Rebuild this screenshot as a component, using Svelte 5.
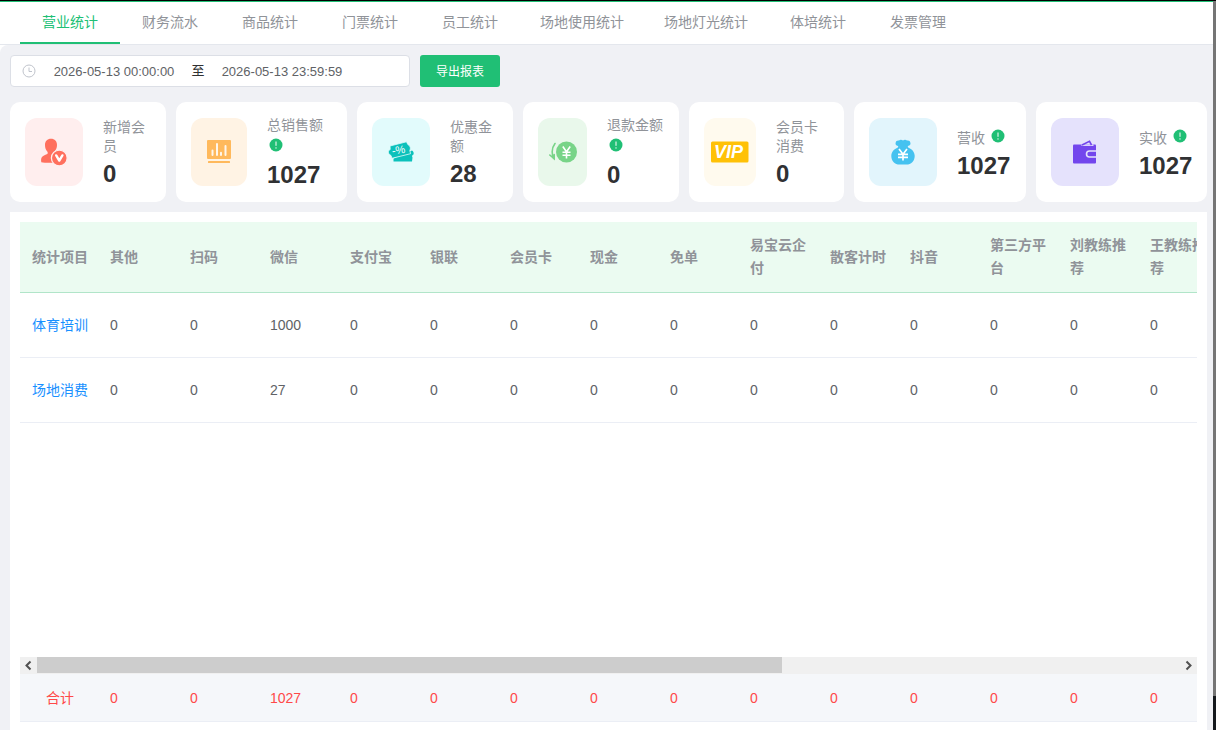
<script>
	const tabs = [
		'营业统计',
		'财务流水',
		'商品统计',
		'门票统计',
		'员工统计',
		'场地使用统计',
		'场地灯光统计',
		'体培统计',
		'发票管理'
	];
	let activeTab = '营业统计';

	let startTime = '2026-05-13 00:00:00';
	let endTime = '2026-05-13 23:59:59';

	// size is the card's share of the row, iconWidth the width of its coloured tile
	const cards = [
		{ icon: 'member', label: '新增会员', value: 0, size: 156, iconWidth: 58, bg: '#ffeeee' },
		{ icon: 'sales', label: '总销售额', value: 1027, tip: true, size: 171, iconWidth: 56, bg: '#fff3e4' },
		{ icon: 'coupon', label: '优惠金额', value: 28, size: 156, iconWidth: 58, bg: '#e2fbfc' },
		{ icon: 'refund', label: '退款金额', value: 0, tip: true, size: 156, iconWidth: 49, bg: '#e9f8eb' },
		{ icon: 'vip', label: '会员卡消费', value: 0, size: 155, iconWidth: 52, bg: '#fffaee' },
		{ icon: 'bag', label: '营收', value: 1027, tip: true, size: 172, iconWidth: 68, bg: '#e2f5fc' },
		{ icon: 'wallet', label: '实收', value: 1027, tip: true, size: 171, iconWidth: 68, bg: '#e5e2fc' }
	];

	const columns = [
		'统计项目',
		'其他',
		'扫码',
		'微信',
		'支付宝',
		'银联',
		'会员卡',
		'现金',
		'免单',
		'易宝云企付',
		'散客计时',
		'抖音',
		'第三方平台',
		'刘教练推荐',
		'王教练推荐'
	];
	const rows = [
		{ name: '体育培训', values: [0, 0, 1000, 0, 0, 0, 0, 0, 0, 0, 0, 0, 0, 0] },
		{ name: '场地消费', values: [0, 0, 27, 0, 0, 0, 0, 0, 0, 0, 0, 0, 0, 0] }
	];

	// add up every column for the footer
	$: totals = rows[0].values.map((_, i) => rows.reduce((sum, row) => sum + row.values[i], 0));

	let bodyEl;
	let footEl;

	// header and rows scroll together with the totals
	function scrollTable(step) {
		bodyEl.scrollLeft += step;
		footEl.scrollLeft = bodyEl.scrollLeft;
	}
</script>

<div class="page">
	<div class="main">
		<nav class="tabs">
			{#each tabs as tab}
				<button class="tab" class:active={tab === activeTab} on:click={() => (activeTab = tab)}>
					{tab}
				</button>
			{/each}
		</nav>

		<div class="content">
			<div class="toolbar">
				<div class="date-range">
					<svg class="clock" viewBox="0 0 14 14" width="14" height="14">
						<circle cx="7" cy="7" r="6" />
						<path d="M7 3.5V7.5H10" />
					</svg>
					<input type="text" aria-label="开始时间" bind:value={startTime} />
					<span class="separator">至</span>
					<input type="text" aria-label="结束时间" bind:value={endTime} />
				</div>
				<button class="export">导出报表</button>
			</div>

			<div class="cards">
				{#each cards as card}
					<section class="card" style="flex: {card.size} 1 {card.size}px">
						<div class="tile" style="width: {card.iconWidth}px; background: {card.bg}">
							{#if card.icon === 'member'}
								<svg viewBox="0 0 28 28" width="28" height="28">
									<path
										fill="#ff705e"
										d="M11 .8c3.700 0 6 2.500 6 6.200 0 2.800-1 5-2.700 6.400v1.600l4 1.500V24c-3 1.200-13.500 1-17 .3-.8-5 .7-6.200 6-8.300.6-.3.6-1.500 0-2.500C5.800 12 5 9.800 5 7 5 3.300 7.300.8 11 .8z"
									/>
									<circle cx="19.300" cy="20" r="7.900" fill="#ff705e" stroke="#ffeeee" stroke-width="1.300" />
									<path d="M16.200 17.400l3.100 5.200 3.100-5.200" fill="none" stroke="#fff" stroke-width="2.400" stroke-linecap="round" stroke-linejoin="round" />
								</svg>
							{:else if card.icon === 'sales'}
								<svg viewBox="0 0 24 24" width="24" height="24">
									<rect width="24" height="19" rx="1" fill="#ffb95c" />
									<rect x="1" y="21" width="22" height="2" rx=".5" fill="#ffb95c" />
									<path d="M5.500 10.500V15M10 4v11M14 12.700V15M18.500 6v9" stroke="#fff6ea" stroke-width="2" stroke-linecap="round" />
								</svg>
							{:else if card.icon === 'coupon'}
								<svg viewBox="0 0 26 22" width="26" height="22">
									<path
										fill="#0bc1bb"
										d="M24 9.500c1.500 1 2 2.500 1.500 4-1.500.5-1.700 2-1 3L24 20.500H5.500v-3z"
									/>
									<path
										fill="#0bc1bb"
										stroke="#e2fbfc"
										stroke-width=".8"
										d="M2 5L18.500.8l1.300 2.700c2.500 1 3.300 4 2 6.200l.8 3L4 17.300l-1-2.800C-.3 13-.3 9.500 2.200 8.500z"
									/>
									<text x="4" y="12.500" transform="rotate(-9 12 10)">-%</text>
								</svg>
							{:else if card.icon === 'refund'}
								<svg viewBox="0 0 28 24" width="28" height="24">
									<circle cx="17.500" cy="12" r="10.500" fill="#78d488" />
									<path d="M13.800 6.500l3.700 5.300 3.700-5.300M17.500 11.800v6.700M13.500 12.200h8M13.500 15.200h8" stroke="#fff" stroke-width="1.600" fill="none" />
									<path d="M6 3.500C2.500 8 2.500 13 4.500 18.500M5.200 14.500v4.300L.8 15" stroke="#78d488" stroke-width="1.600" fill="none" stroke-linecap="round" />
								</svg>
							{:else if card.icon === 'vip'}
								<svg viewBox="0 0 38 22" width="38" height="22">
									<rect y=".5" width="37.500" height="21" rx="1.500" fill="#ffc107" />
									<text class="vip" x="3" y="17">VIP</text>
								</svg>
							{:else if card.icon === 'bag'}
								<svg viewBox="0 0 24 26" width="24" height="26">
									<path
										fill="#45c2f0"
										d="M8 1.500c1.400-1.300 3-.8 4 .1 1.200-1 2.800-1 4 0 1.500-.5 3.200.2 3.300 2 .8 1.800-.6 3.400-2.300 3.400-.4.6-.3 1.100.2 1.600C21 10.300 23.700 13 23.700 17c0 5-3.700 8.600-8.200 8.600h-7C4 25.600.3 22 .3 17 .3 13 3 10.300 6.800 8.600c.5-.5.6-1 .2-1.600C5.300 7 4 5.400 4.700 3.600 4.900 1.800 6.500 1.100 8 1.500z"
									/>
									<path d="M8 10l4 5.200 4-5.200M12 15.200v6.300M7 15.300h10M7 18.300h10" stroke="#fff" stroke-width="1.700" fill="none" />
								</svg>
							{:else}
								<svg viewBox="0 0 24 24" width="24" height="24">
									<rect y="4.500" width="23" height="19" rx="1" fill="#7346ed" />
									<path d="M8.500 5.200h12" stroke="#e5e2fc" stroke-width="1.400" />
									<path d="M9 5l7.500-3.700L18.500 5" stroke="#7346ed" stroke-width="1.600" fill="none" />
									<path d="M23 11h-6.500a3 3 0 0 0 0 6H23" fill="#7346ed" stroke="#e5e2fc" stroke-width="1.600" />
								</svg>
							{/if}
						</div>
						<div class="info">
							<div class="label">
								{card.label}
								{#if card.tip}
									<svg class="tip" viewBox="0 0 14 14" width="14" height="14">
										<circle cx="7" cy="7" r="6.500" />
										<path d="M7 3.500v4.300M7 9.300v1.300" />
									</svg>
								{/if}
							</div>
							<div class="value">{card.value}</div>
						</div>
					</section>
				{/each}
			</div>

			<div class="panel">
				<div class="table-body" bind:this={bodyEl}>
					<table>
						<thead>
							<tr>
								{#each columns as column}
									<th scope="col">{column}</th>
								{/each}
							</tr>
						</thead>
						<tbody>
							{#each rows as row}
								<tr>
									<td><a href="#detail">{row.name}</a></td>
									{#each row.values as value}
										<td>{value}</td>
									{/each}
								</tr>
							{/each}
						</tbody>
					</table>
				</div>

				<div class="scrollbar">
					<button aria-label="向左滚动" on:click={() => scrollTable(-80)}>
						<svg viewBox="0 0 17 17" width="17" height="17"><path d="M10.500 4.500l-4 4 4 4" /></svg>
					</button>
					<div class="track"><div class="thumb"></div></div>
					<button aria-label="向右滚动" on:click={() => scrollTable(80)}>
						<svg viewBox="0 0 17 17" width="17" height="17"><path d="M6.500 4.500l4 4-4 4" /></svg>
					</button>
				</div>

				<div class="table-foot" bind:this={footEl}>
					<table>
						<tbody>
							<tr>
								<td>合计</td>
								{#each totals as total}
									<td>{total}</td>
								{/each}
							</tr>
						</tbody>
					</table>
				</div>
			</div>
		</div>
	</div>
	<div class="edge"></div>
</div>

<style>
	:global(body) {
		margin: 0;
	}

	.page {
		display: flex;
		box-sizing: border-box;
		height: 100vh;
		min-height: 560px;
		border-top: 1px solid #000;
		font-family: 'Liberation Sans', 'Noto Sans CJK SC', sans-serif;
		font-size: 14px;
		color: #606266;
		background: #fff;
	}

	.page * {
		box-sizing: border-box;
	}

	button,
	input {
		font-family: inherit;
		border: none;
		padding: 0;
	}

	.main {
		display: flex;
		flex-direction: column;
		flex: 1;
		min-width: 0;
		border-top: 1px solid #20bf75;
	}

	.edge {
		flex: none;
		width: 3px;
		background: linear-gradient(#757575 695px, #15191d 695px);
	}

	.tabs {
		display: flex;
		flex: none;
		padding: 0 20px;
		border-bottom: 1px solid #e4e7ed;
	}

	.tab {
		height: 42px;
		min-width: 100px;
		padding: 0 20px 2px;
		border-bottom: 2px solid transparent;
		background: none;
		font-size: 14px;
		color: #909399;
		white-space: nowrap;
		cursor: pointer;
	}

	.tab.active {
		border-bottom-color: #20bf75;
		color: #20bf75;
	}

	.content {
		display: flex;
		flex-direction: column;
		flex: 1;
		min-height: 0;
		padding: 10px 6px 0 10px;
		border-radius: 8px 0 0 0;
		background: #f0f1f5;
	}

	.toolbar {
		display: flex;
		gap: 10px;
		margin-bottom: 15px;
	}

	.date-range {
		display: flex;
		align-items: center;
		width: 400px;
		height: 32px;
		padding: 0 11px;
		border: 1px solid #dcdfe6;
		border-radius: 4px;
		background: #fff;
	}

	.date-range input {
		width: 148px;
		height: 28px;
		background: none;
		font-size: 13px;
		color: #606266;
		text-align: center;
		outline: none;
	}

	.clock {
		flex: none;
		margin-right: 4px;
		fill: none;
		stroke: #c0c4cc;
	}

	.separator {
		width: 20px;
		font-size: 13px;
		line-height: 28px;
		color: #303133;
		text-align: center;
	}

	.export {
		width: 80px;
		height: 32px;
		padding-bottom: 2px;
		border-radius: 3px;
		background: #20bf75;
		color: #fff;
		font-size: 12px;
		cursor: pointer;
	}

	.cards {
		display: flex;
		gap: 10px;
		margin-bottom: 10px;
	}

	.card {
		display: flex;
		align-items: center;
		gap: 20px;
		min-width: 0;
		height: 100px;
		padding: 0 15px;
		border-radius: 10px;
		background: #fff;
	}

	.tile {
		display: flex;
		flex: none;
		align-items: center;
		justify-content: center;
		height: 68px;
		border-radius: 12px;
	}

	.tile text {
		fill: #fff;
		font-size: 11px;
	}

	.tile .vip {
		font-size: 18px;
		font-weight: bold;
		font-style: italic;
	}

	.info {
		flex: 1;
		min-width: 0;
	}

	.label {
		line-height: 19px;
		color: #909399;
	}

	.tip {
		margin-top: 3px;
		margin-left: 2px;
		vertical-align: 0;
		fill: #20bf75;
		stroke: #fff;
	}

	.tip circle {
		stroke: none;
	}

	.value {
		margin-top: 5px;
		font-size: 24px;
		font-weight: bold;
		line-height: 26px;
		color: #303133;
	}

	.panel {
		display: flex;
		flex-direction: column;
		flex: 1;
		min-height: 0;
		padding: 10px 10px 8px;
		background: #fff;
	}

	.table-body {
		flex: 1;
		min-height: 0;
		overflow: hidden;
	}

	.table-foot {
		flex: none;
		overflow: hidden;
		background: #f5f7fa;
	}

	table {
		width: 1200px;
		table-layout: fixed;
		border-collapse: separate;
		border-spacing: 0;
	}

	th,
	td {
		width: 80px;
		padding: 0 10px;
		border-bottom: 1px solid #ebeef5;
		line-height: 23px;
		text-align: left;
	}

	th:first-child,
	td:first-child {
		text-align: center;
	}

	th {
		height: 71px;
		border-bottom-color: #b1e5c9;
		background: #ebfbf1;
		color: #909399;
	}

	td {
		height: 65px;
	}

	td a {
		color: #1890ff;
		text-decoration: none;
	}

	.table-foot td {
		height: 48px;
		padding-top: 2px;
		background: #f5f7fa;
		color: #ff4949;
	}

	.scrollbar {
		display: flex;
		flex: none;
		height: 17px;
		background: #f0f0f0;
	}

	.scrollbar button {
		width: 17px;
		height: 17px;
		background: none;
	}

	.scrollbar svg {
		display: block;
		fill: none;
		stroke: #505050;
		stroke-width: 2;
	}

	.track {
		flex: 1;
	}

	.thumb {
		width: 65.2%;
		height: 16px;
		background: #cdcdcd;
	}
</style>
